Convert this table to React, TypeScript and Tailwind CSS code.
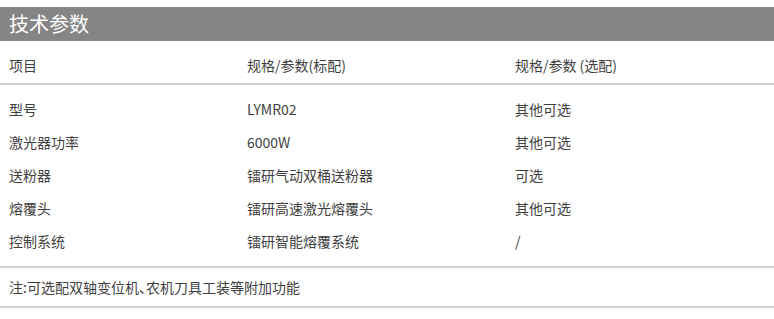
import React from 'react';

const rows = [
  ['型号', 'LYMR02', '其他可选'],
  ['激光器功率', '6000W', '其他可选'],
  ['送粉器', '镭研气动双桶送粉器', '可选'],
  ['熔覆头', '镭研高速激光熔覆头', '其他可选'],
  ['控制系统', '镭研智能熔覆系统', '/'],
];

const font = { fontFamily: '"Noto Sans CJK SC", "Noto Sans", sans-serif' };

const Row: React.FC<{ cells: string[]; className?: string }> = ({ cells, className }) => (
  <div className={`grid grid-cols-[238px_268px_1fr] items-center pl-[9px] ${className ?? ''}`}>
    {cells.map((c, i) => (
      <div key={i} className="whitespace-nowrap">
        {c}
      </div>
    ))}
  </div>
);

export default function App() {
  return (
    <div className="w-[774px] h-[319px] bg-white pt-[7px] text-[14px] text-[#3f3f3f]" style={font}>
      <div className="h-[34px] bg-[#858585] flex items-center pl-[9px] text-[20px] text-white">
        技术参数
      </div>
      <Row
        cells={['项目', '规格/参数(标配)', '规格/参数 (选配)']}
        className="h-[44px] pt-[6px] border-b-2 border-[#d2d2d2]"
      />
      <div className="pt-[8px] pb-[8px] border-b-2 border-[#d2d2d2]">
        {rows.map((r, i) => (
          <Row key={i} cells={r} className="h-[33px]" />
        ))}
      </div>
      <div className="h-[40px] flex items-center pl-[9px] border-b-2 border-[#d2d2d2]">
        <span>
          注:可选配双轴变位机<span className="[font-feature-settings:'halt']">、</span>农机刀具工装等附加功能
        </span>
      </div>
    </div>
  );
}
